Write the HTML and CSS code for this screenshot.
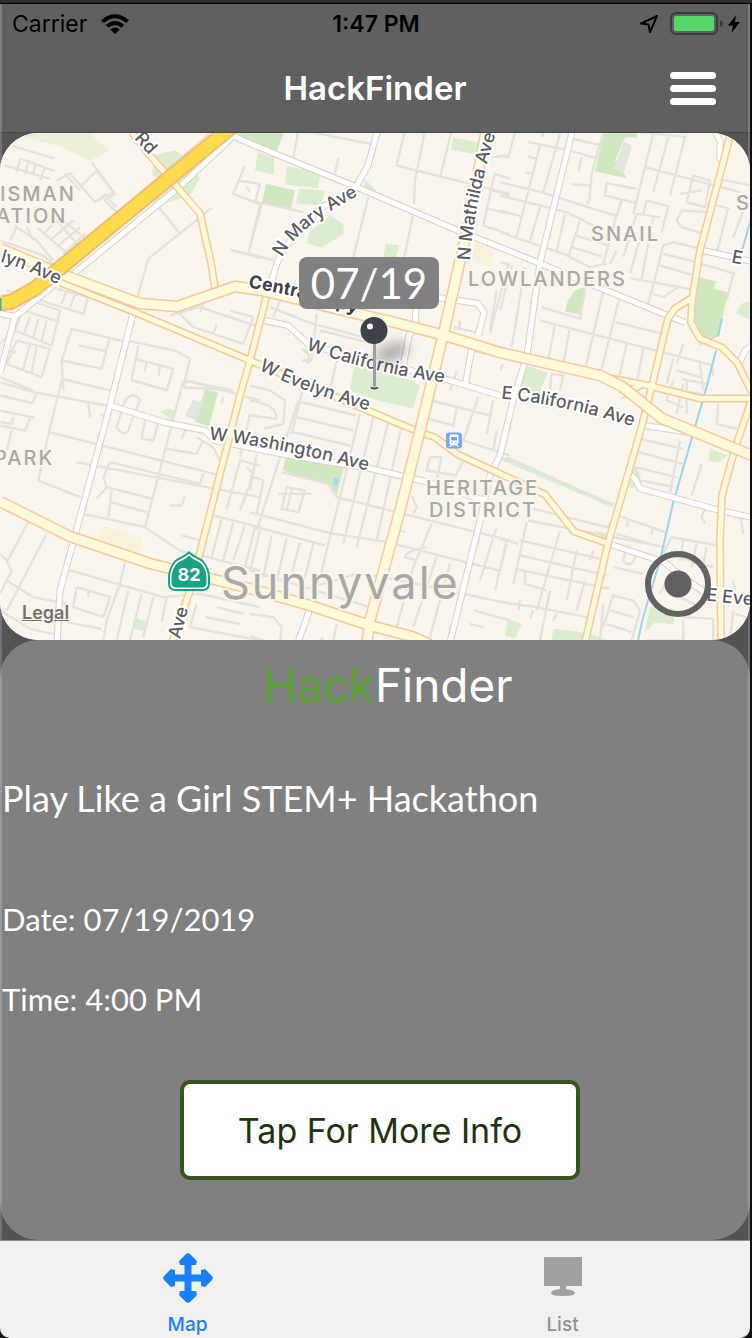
FILE: index.html
```html
<!DOCTYPE html>
<html lang="en">
<head>
<meta charset="utf-8">
<meta name="viewport" content="width=device-width, initial-scale=1">
<title>HackFinder</title>
<link rel="stylesheet" href="styles.css">
</head>
<body>
<div class="app">
  <header class="top">
    <div class="status">
      <div class="status-left">
        <span>Carrier</span>
        <svg class="wifi" viewBox="0 0 28 20" aria-hidden="true">
          <path d="M0 6.200Q14-5.600 28 6.200L25.200 9Q14-.4 2.800 9Z"/>
          <path d="M4.700 11Q14 2.800 23.300 11L20.400 13.800Q14 8.200 7.600 13.800Z"/>
          <path d="M9.300 15.600Q14 11.600 18.700 15.600L14 20Z"/>
        </svg>
      </div>
      <span class="clock">1:47 PM</span>
      <div class="status-right">
        <svg class="location" viewBox="0 0 20 20" aria-hidden="true"><path d="M18 2 2 9.500 9.500 10.500 11 18Z"/></svg>
        <svg class="battery" viewBox="0 0 54 24" aria-hidden="true">
          <rect class="battery-shell" x="1" y="1" width="46" height="21" rx="5"/>
          <rect class="battery-charge" x="4" y="4" width="40" height="15" rx="2"/>
          <path class="battery-tip" d="M50 8Q53 9 53 11.500T50 15Z"/>
        </svg>
        <svg class="bolt" viewBox="0 0 12 18" aria-hidden="true"><path d="M8 0 0 10.500H5L3.500 18 12 7H7Z"/></svg>
      </div>
    </div>
    <div class="nav">
      <h1 class="nav-title">HackFinder</h1>
      <button class="menu" type="button" aria-label="Menu"><span></span><span></span><span></span></button>
    </div>
  </header>

  <main class="content">
    <section class="map" aria-label="Map of Sunnyvale">
      <svg class="map-canvas" viewBox="0 132 750 508" preserveAspectRatio="xMidYMid slice">
        <defs>
          <path id="p-evelyn-l" d="M0 261Q30 270 62 286"/>
          <path id="p-mary" d="M282 257Q300 224 364 192"/>
          <path id="p-mathilda" d="M470 260Q474 200 500 120"/>
          <path id="p-wcal" d="M306 349Q370 372 450 383"/>
          <path id="p-wev" d="M259 369Q300 391 372 411"/>
          <path id="p-ecal" d="M501 398Q570 405 642 429"/>
          <path id="p-wash" d="M209 439Q280 447 374 472"/>
          <path id="p-central" d="M248 287Q310 297 368 317"/>
        </defs>
        <rect class="land" y="132" width="752" height="508"/>

        <g class="park">
          <path class="pale" d="M8 133H90L109 150 90 160 60 146Z"/>
          <path d="M155 154 175 150 190 160 200 178 190 195 150 208 165 180 152 175Z"/>
          <path class="deep" d="M235 132H284L275 155Z"/>
          <path d="M258 152 274 156 274 174 255 170ZM287 166 321 172 318 188 285 184ZM300 188 325 190 320 205 296 203ZM309 232 330 215 344 224 343 234 322 247 307 243ZM366 149 384 152ZM386 243 399 245 395 260 383 258ZM453 137 479 142 476 154 451 149ZM365 178 376 190 364 190Z"/>
          <path class="deep" d="M266 183 295 190 291 208 262 203ZM604 132H637V137H625L615 160 627 178 595 171ZM698 276 716 281 714 288 728 292 718 336 700 345 694 325ZM575 290 586 286 580 314 565 311 568 300Z"/>
          <path d="M525 365 548 372 538 395 515 392ZM355 360 385 365 420 385 413 408 378 400 350 390Z"/>
          <path d="M160 411 168 408 175 410 172 420ZM286 455 344 466 337 495 328 484 283 470Z"/>
          <path class="deep" d="M205 389 218 392 209 426 195 421ZM286 456 343 468 337 493 327 484 283 470ZM300 348 310 350 308 355Z"/>
          <path d="M635 465 641 475 634 488 627 486ZM508 619 522 623 515 638 505 635ZM554 628 590 633 608 640H551ZM134 617 147 621 144 631 133 628ZM650 606 673 608 674 624 655 622 645 632ZM710 448 727 455 718 462 709 460ZM742 303 752 300V320L736 313ZM594 530 607 533 605 541Z"/>
          <path d="M500 455 614 503 612 507 500 459Z"/>
        </g>
        <g class="plot">
          <path d="M102 525 143 538 139 552 97 538ZM475 242 495 248 490 267 472 260Z"/>
          <path class="campus" d="M624 141 632 145 624 172 614 168ZM193 399 204 402 196 420 185 415Z"/>
          <path class="pond" d="M334 477 339 478 337 485 333 484Z"/>
        </g>

        <g class="minor" transform="translate(0 130) scale(.3333)">
          <path d="M38 47 165 84M12 104 60 118 150 145M62 84 48 125M88 88 75 130M108 98 98 132M60 84 165 122M135 110 120 150M170 150 210 128 285 215 320 190M240 170 290 120 340 185 285 215M275 95 345 190 315 210 350 245M325 205 350 230M195 130 240 180M0 330 60 350 130 375 170 410M30 330 50 290 110 330 160 390M110 290 180 350 220 380M130 310 170 270 240 350M150 330 220 270M170 350 240 290M190 370 255 310M150 240 260 325M60 230 45 300M80 290 100 330M465 215 540 310M635 232 445 385 412 500M735 105 700 190 780 222M712 150 780 160M738 165 750 185M780 225 745 370M688 357 780 382M510 555 600 530 780 590M540 550 580 590 730 640 760 560M610 520 600 545M650 580 640 610M690 540 760 560"/>
          <path d="M20 480 90 500 250 550 265 500 170 475M90 510 180 540 155 645 45 600 70 540 180 575M90 560 70 615M115 565 100 620M140 570 125 630M200 480 185 520M225 490 210 530M0 640 40 600M50 630 150 655 125 740 20 700 50 630M90 640 70 715M110 645 95 725M10 660 50 665M190 780 185 690 215 595 370 632M185 690 305 715 328 625M235 645 320 663M185 745 330 780M0 740 100 780M390 632 530 662 570 685 550 770 700 780M415 645 395 750 500 778 520 715 405 685M440 695 433 725M480 708 475 735M550 750 700 780"/>
        </g>
        <g class="minor" transform="translate(250 130) scale(.3333)">
          <path d="M145 0 130 80M160 0 370 42M265 82 255 130M0 155 30 160 15 215M0 210 160 245M35 220 0 350M355 200 310 380M0 370 70 390M465 0 440 105 780 190M525 0 495 150 492 220M605 0 570 140M490 250 440 490M735 125 700 285 780 312M735 130 780 145M725 180 780 195M715 235 780 250M730 80 780 75M775 400 720 610M750 395 780 405M740 480 720 600M60 530 190 580 340 620M90 510 70 560M200 550 185 690 155 690M215 540 400 585M210 600 370 640M120 600 180 640 175 700M260 690 240 780M610 590 700 610M630 570 625 600M620 720 600 780"/>
        </g>
        <g class="minor" transform="translate(500 130) scale(.3333)">
          <path d="M0 75 25 80 45 5M130 0 128 20M85 35 210 60 285 82M220 25 305 45M120 45 50 318M180 10 130 185M85 78 110 85M75 125 100 130M245 80 235 125M310 5 275 130 268 210 260 220M215 162 275 165M0 155 130 187 350 257M0 195 200 245 280 285M0 240 65 258M120 230 90 330M195 250 170 365M240 270 205 380M225 315 325 345M215 350 305 378M0 305 190 370 270 410 320 400M460 10 400 250M350 250 310 400M435 110 720 185M505 20 460 185M555 20 510 195M380 0 560 20M410 175 320 158 315 195 410 218M365 210 345 270M430 250 440 210 505 228 485 305M410 250 480 260M580 135 630 150 615 230 560 215ZM540 190 605 180M620 245 545 240 530 270 545 290 610 310M615 215 690 235M670 148 752 165M685 230 650 370M730 240 700 320M350 360 330 400M430 290 390 430M460 260 425 445M410 250 370 380M525 335 490 345 445 520M520 335 600 355M490 370 590 395M480 405 580 435M390 443 570 475M460 490 490 500 535 470M605 400 705 430M700 430 680 510M0 395 30 400M35 405 0 540M75 410 35 650M120 410 90 540M125 530 240 565 255 480M118 570 640 705M165 580 145 690M210 590 190 700M310 480 255 720M360 495 300 735M345 575 490 610M380 640 355 750M430 655 410 760M550 640 530 700M520 685 500 760M600 700 610 780M530 720 600 740M545 745 620 760M635 705 640 735M150 780 155 730 190 735 180 780M0 720 10 700"/>
        </g>
        <g class="minor" transform="translate(0 380) scale(.3333)">
          <path d="M0 5 100 35 320 75M110 35 98 68 0 45M185 0 148 150 115 300 240 350M265 70 270 110M300 100 315 105M0 90 105 112M40 110 35 130 0 125M90 115 75 150 0 135M35 150 20 210M148 155 660 285M420 60Q400 30 375 60L350 140Q370 170 385 150L395 120 420 60M435 120 425 175 460 180 475 125M550 0 435 440M400 0 500 30M510 0 500 30M560 0 780 60M670 50 665 70M545 175 560 140M500 205 590 220 610 180M590 170 640 200 660 240M230 245 620 320 780 350M330 245 600 310 610 280M330 245 310 290 320 320 290 355M320 320 460 355M335 330 325 410M330 365 440 395M250 400 435 440 540 510 780 570M510 375 545 375 555 345M545 465 600 480M640 405 780 440M680 385 720 240 780 255M720 390 760 280 740 260M750 100 720 230M665 415 635 530M700 425 670 540M735 435 700 540M765 440 735 560M85 425 20 545 35 570 20 600 100 650 200 670M140 460 20 690M0 520 20 540M20 600 0 640M0 690 90 745 180 765M210 570 490 650 600 640 780 680M375 545 360 610 320 720 310 780M230 620 220 680 310 710 330 650 230 620M265 630 265 650M385 630 350 780M425 640 390 780M460 650 430 770M500 650 485 725M590 670 570 740 780 780M615 710 720 730M650 680 730 700M200 725 305 745"/>
        </g>
        <g class="minor" transform="translate(250 380) scale(.3333)">
          <path d="M0 15 60 30 105 60 100 130 40 145M0 60Q80 70 80 115L0 105M160 20 125 160M155 65 320 105M140 110 310 150M130 155 300 195M330 100 275 330 185 690M145 60 20 450M95 275 235 310 260 350 780 480M110 320 165 330 145 395 95 385ZM85 340 185 340M125 325 110 390M0 395 240 458 410 485 745 570M0 435 225 495M370 110 280 490M415 125 320 500M455 135 380 480M0 285 40 300 20 400M20 220 0 330M30 450 0 570M65 465 40 590M110 475 80 600M150 485 120 600M190 490 160 610M0 570 360 680M185 620 320 580 400 590 640 640 780 670M545 60 720 105M535 115 610 135M620 80 610 140M685 50 640 180 780 225M730 60 710 160M740 150 730 210M540 230 575 230 560 300M540 230 530 270 620 285M640 240 615 290M485 345 500 380 490 400M545 430 490 560 440 740M530 500Q470 510 465 530L500 540M560 530 490 740M600 550 540 770M690 420 685 490M740 440 690 600M770 480 735 630M645 600 600 760M670 690 780 720M660 730 700 740M0 700 70 710 95 740 90 780M260 730 250 780M210 780 220 770M0 765 40 780M450 450 465 455"/>
        </g>
        <g class="minor" transform="translate(500 380) scale(.3333)">
          <path d="M20 230 340 375M420 175 550 205M415 215 550 250M405 260 530 290M400 295 520 320M540 180 510 335M520 0 500 60 550 80M530 30 610 40M550 10 530 100M560 0 560 100M655 70 650 130 710 145M605 250 575 345M615 385 605 410 615 430M720 400 730 460M100 385 320 440 330 430M85 420 495 500M340 400 495 455M460 440 455 460M385 415 380 440M80 425 40 610M60 480 320 540M0 475 55 490M60 525 320 585M45 565 330 625M20 490 0 570M180 450 110 690M230 510 200 660M280 510 270 540M75 575 75 610 140 630M0 665 110 680 260 710M150 630 120 780M60 655 55 690M100 690 90 715M255 600 230 690M170 700 160 720M310 670 300 780M335 645 400 660 420 690 395 780M340 640 310 740M330 690 400 710M320 730 395 755M340 560 430 580M350 460 450 490M375 510 370 540Q385 560 400 545L410 520M515 470 655 495M515 470 490 520M550 480 540 540M590 490 575 560M620 500 605 580M500 520 640 560M500 600 480 640M700 690 690 780M705 700 752 715M550 710 640 715 640 780M440 780 550 780 550 720M520 640 600 680M700 600 705 640"/>
        </g>

        <g class="river"><path d="M752 215 742 250M722 318 718 336M716 350 707 385 692 437 673 503 660 560 643 617 638 640"/></g>

        <g class="street-case">
          <path d="M15 316 0 372M0 313 15 316 57 282M168 172 215 132M57 287 180 186 234 135M133 313 110 405 75 535 60 590 57 642M110 405 165 422 205 430 215 440 290 455 370 468 425 481 485 500M230 134 250 143 360 188 460 231 508 250 685 322M377 132 368 165 355 188 320 208 290 240 278 260 268 292M572 132 540 262 527 355 513 400 500 455 490 475 480 520 450 642M265 320 288 325 310 345 380 362 450 380 500 395M438 297 478 303 484 312 478 335M446 333 472 347 465 386M417 300 415 322 409 335 402 372M409 335 420 325M472 347 485 350M630 474 635 478 640 488 720 510 752 517M638 424 690 432M608 543 665 562 680 575 705 592 752 600M703 250 752 261M715 132 720 140 720 158 725 161M740 362 745 350 752 345M310 608 298 642"/>
        </g>
        <g class="street">
          <path d="M15 316 0 372M0 313 15 316 57 282M168 172 215 132M57 287 180 186 234 135M133 313 110 405 75 535 60 590 57 642M110 405 165 422 205 430 215 440 290 455 370 468 425 481 485 500M230 134 250 143 360 188 460 231 508 250 685 322M377 132 368 165 355 188 320 208 290 240 278 260 268 292M572 132 540 262 527 355 513 400 500 455 490 475 480 520 450 642M265 320 288 325 310 345 380 362 450 380 500 395M438 297 478 303 484 312 478 335M446 333 472 347 465 386M417 300 415 322 409 335 402 372M409 335 420 325M472 347 485 350M630 474 635 478 640 488 720 510 752 517M638 424 690 432M608 543 665 562 680 575 705 592 752 600M703 250 752 261M715 132 720 140 720 158 725 161M740 362 745 350 752 345M310 608 298 642"/>
        </g>
        <g class="road-case">
          <path d="M132 132 150 155 200 213 211 262 216 294M268 290 250 360 240 395 198 560 190 590 172 642M60 282 133 311 250 360 370 411 418 431 435 437 458 454 495 471 545 494 574 531 608 543M731 132 700 250 692 300 691 322 700 338 722 347 737 362 752 392M691 298 675 308 668 318 652 385 642 425 608 543 585 642M590 374 648 385 700 398 752 398M752 398 735 448 722 495 720 540 721 642M620 395 640 385"/>
        </g>
        <g class="road">
          <path d="M132 132 150 155 200 213 211 262 216 294M268 290 250 360 240 395 198 560 190 590 172 642M60 282 133 311 250 360 370 411 418 431 435 437 458 454 495 471 545 494 574 531 608 543M731 132 700 250 692 300 691 322 700 338 722 347 737 362 752 392M691 298 675 308 668 318 652 385 642 425 608 543 585 642M590 374 648 385 700 398 752 398M752 398 735 448 722 495 720 540 721 642M620 395 640 385"/>
        </g>
        <g class="artery-case">
          <path d="M0 248 57 272 140 303 177 306 215 293 235 286 262 290 340 309 395 322 445 335 500 352 600 375 622 386 662 418 752 455M486 132 467 230 443 335 420 430 400 510 370 620 367 642M0 501 70 536 150 563 250 588 310 605 370 625 412 636 430 644"/>
        </g>
        <g class="artery">
          <path d="M0 248 57 272 140 303 177 306 215 293 235 286 262 290 340 309 395 322 445 335 500 352 600 375 622 386 662 418 752 455M486 132 467 230 443 335 420 430 400 510 370 620 367 642M0 501 70 536 150 563 250 588 310 605 370 625 412 636 430 644"/>
        </g>
        <path class="highway-case" d="M232 126 57 270 35 288 12 301 0 303"/>
        <path class="highway" d="M232 126 57 270 35 288 12 301 0 303"/>
        <path class="teal" d="M0 298H1V310H0Z"/>

        <g class="label area">
          <text x="0" y="200">ISMAN</text>
          <text x="-4" y="222">ATION</text>
          <text x="591" y="240">SNAIL</text>
          <text x="468" y="285">LOWLANDERS</text>
          <text x="736" y="209">S</text>
          <text x="-6" y="464">PARK</text>
          <text x="426" y="494">HERITAGE</text>
          <text x="429" y="516">DISTRICT</text>
        </g>
        <text class="label city" x="221" y="598">Sunnyvale</text>
        <g class="label road-name">
          <text><textPath href="#p-evelyn-l">lyn Ave</textPath></text>
          <text><textPath href="#p-mary">N Mary Ave</textPath></text>
          <text><textPath href="#p-mathilda">N Mathilda Ave</textPath></text>
          <text><textPath href="#p-wcal">W California Ave</textPath></text>
          <text><textPath href="#p-wev">W Evelyn Ave</textPath></text>
          <text><textPath href="#p-ecal">E California Ave</textPath></text>
          <text><textPath href="#p-wash">W Washington Ave</textPath></text>
          <text transform="translate(134 138) rotate(48)">Rd</text>
          <text transform="translate(180 639) rotate(-75)">Ave</text>
          <text transform="translate(731 262) rotate(10)">E</text>
          <text transform="translate(706 600) rotate(6)">E Eve</text>
          <text class="express"><textPath href="#p-central">Central Expy</textPath></text>
        </g>

        <g transform="translate(168 550)">
          <path class="shield-rim" d="M21 2C26 7 31 7 35 11 39 16 41 21 41 27V33Q41 39 35 39.500H7Q1 39 1 33V27C1 21 3 16 7 11 11 7 16 7 21 2Z"/>
          <path class="shield" d="M21 5C26 10 30 10 33 13 37 18 38.500 22 38.500 27V32Q38.500 36.500 34 37H8Q3.500 36.500 3.500 32V27C3.500 22 5 18 9 13 12 10 16 10 21 5Z"/>
          <text class="shield-text" x="21" y="30">82</text>
        </g>
        <g class="station" transform="translate(446 432)">
          <rect width="16" height="16" rx="3"/>
          <path fill-rule="evenodd" d="M5 2H11Q12.500 2 12.500 4V10Q12.500 12 11 12L13 14.500H11.500L10.500 13H5.500L4.500 14.500H3L5 12Q3.500 12 3.500 10V4Q3.500 2 5 2ZM5 4.500V8H11V4.500ZM5 9.500V10.500H6.500V9.500ZM9.500 9.500V10.500H11V9.500Z"/>
        </g>

        <g class="pin">
          <ellipse class="pin-shadow" cx="392" cy="352" rx="18" ry="9" transform="rotate(-20 392 352)"/>
          <path class="pin-shaft" d="M373 342H376V386H373Z"/>
          <path class="pin-foot" d="M371 387Q374.500 389 378 387"/>
          <circle class="pin-head" cx="374" cy="330" r="13.500"/>
          <circle class="pin-shine" cx="370" cy="326" r="3"/>
        </g>
      </svg>
      <div class="callout">07/19</div>
      <a class="legal" href="#legal">Legal</a>
      <button class="locate" type="button" aria-label="Show my location"></button>
    </section>

    <section class="card">
      <h2 class="brand"><span class="brand-accent">Hack</span>Finder</h2>
      <p class="event-name">Play Like a Girl STEM+ Hackathon</p>
      <p class="event-detail">Date: 07/19/2019</p>
      <p class="event-detail">Time: 4:00 PM</p>
      <button class="more" type="button">Tap For More Info</button>
    </section>
  </main>

  <nav class="tabs" aria-label="Sections">
    <a class="tab active" href="#map">
      <svg class="tab-icon" viewBox="0 0 50 50" aria-hidden="true"><path d="M25 0 27 1 34 8 33 12H28.500V21.500H38V17L42 16 49 23 50 25 49 27 42 34 38 33V28.500H28.500V38H33L34 42 27 49 25 50 23 49 16 42 17 38H21.500V28.500H12V33L8 34 1 27 0 25 1 23 8 16 12 17V21.500H21.500V12H17L16 8 23 1Z"/></svg>
      <span>Map</span>
    </a>
    <a class="tab" href="#list">
      <svg class="tab-icon" viewBox="0 0 50 50" aria-hidden="true"><path d="M6 4H44V33H28V36Q37 37 37 40T25 43 13 40 22 36V33H6Z"/></svg>
      <span>List</span>
    </a>
  </nav>
</div>
</body>
</html>
```
FILE: styles.css
```css
* { box-sizing: border-box; }

body {
  margin: 0;
  min-height: 100vh;
  padding-right: 2px;
  background: #101012;
  border-top: 3px solid #2e2e31;
  font-family: Inter, "Liberation Sans", sans-serif;
}

h1, h2, p { margin: 0; font-weight: 400; }
button { font: inherit; padding: 0; cursor: pointer; }

.app {
  position: relative;
  display: flex;
  flex-direction: column;
  min-height: calc(100vh - 3px);
  overflow: hidden;
  background: #545454;
  border-top: 1px solid #000;
  border-radius: 0 0 10px 10px;
}

.app::after {
  content: "";
  position: absolute;
  inset: 0 0 98px;
  border: solid rgba(255, 255, 255, .18);
  border-width: 0 2px;
  pointer-events: none;
}

/* Status and navigation bars */
.top {
  background: #606060;
  border-bottom: 1px solid #484848;
}

.status {
  display: grid;
  grid-template-columns: 1fr auto 1fr;
  align-items: center;
  height: 40px;
  padding: 0 10px 0 12px;
  font-size: 23px;
  line-height: 28px;
  color: #000;
}

.status-left, .status-right { display: flex; align-items: center; }
.status-left { gap: 14px; }
.status-right { justify-content: flex-end; gap: 7px; }
.clock { font-weight: 600; }
.wifi { width: 28px; height: 20px; }
.location { width: 20px; height: 20px; margin-right: 4px; fill: none; stroke: #000; stroke-width: 2; stroke-linejoin: round; }
.battery { width: 54px; height: 24px; margin-right: -3px; }
.battery-shell { fill: none; stroke: #3b3b3b; stroke-width: 2; }
.battery-charge { fill: #55d769; }
.battery-tip { fill: #3b3b3b; }
.bolt { width: 12px; height: 18px; }

.nav {
  display: grid;
  grid-template-columns: 1fr auto 1fr;
  align-items: center;
  height: 88px;
  padding: 0 34px;
}

.nav-title { grid-column: 2; font-size: 33px; font-weight: 600; color: #fff; }

.menu {
  justify-self: end;
  display: grid;
  gap: 6px;
  width: 46px;
  border: 0;
  background: none;
}

.menu span { height: 7px; border-radius: 4px; background: #fff; }

.content { flex: 1; display: flex; flex-direction: column; }

/* Map */
.map {
  position: relative;
  overflow: hidden;
  border-radius: 38px;
  background: #f9f4ec;
}

.map-canvas { display: block; width: 100%; aspect-ratio: 750 / 507; }
.land { fill: #f9f4ec; }
.park { fill: #dcedcf; }
.park .pale { fill: #edefd9; }
.park .deep { fill: #d0e8c0; }
.plot { fill: #f9f0d9; }
.plot .campus { fill: #e1e6e0; }
.plot .pond { fill: #a5d9f2; }

.minor, .river, .street, .street-case, .road, .road-case,
.artery, .artery-case, .highway, .highway-case {
  fill: none;
  stroke-linejoin: round;
}

.minor { stroke: #e5e2dd; stroke-width: 7px; }
.river { stroke: #96d5f1; stroke-width: 2px; }
.street-case { stroke: #d9d2cb; stroke-width: 7px; }
.street { stroke: #fff; stroke-width: 5px; }
.road-case { stroke: #f5ca9c; stroke-width: 8px; }
.road { stroke: #fdf8d8; stroke-width: 5px; }
.artery-case { stroke: #f5ca9c; stroke-width: 12px; }
.artery { stroke: #fdf9d9; stroke-width: 9px; }
.highway-case { stroke: #f3bd74; stroke-width: 16px; }
.highway { stroke: #ffdc4e; stroke-width: 12px; }
.teal { fill: #19a283; stroke: #19a283; }

.label { paint-order: stroke; stroke: #f9f4ec; stroke-width: 4px; stroke-linejoin: round; }
.area { font-size: 20px; font-weight: 500; letter-spacing: 2px; fill: #aaa8a4; }
.city { font-size: 45px; letter-spacing: 2px; fill: #aaa8a4; }
.road-name { font-size: 18px; font-weight: 500; fill: #5d5d5e; stroke: #fff; }
.express { font-weight: 700; fill: #3f4144; }

.shield-rim { fill: #fff; stroke: #19a283; stroke-width: 2px; }
.shield { fill: #19a283; }
.shield-text { font-size: 18px; font-weight: 700; fill: #fff; text-anchor: middle; }
.station rect { fill: #76a9ee; }
.station path { fill: #fff; }

.pin-shadow { fill: #000; opacity: .28; filter: blur(6px); }
.pin-shaft { fill: #9b9da0; }
.pin-foot { fill: none; stroke: #3c4047; stroke-width: 2px; }
.pin-head { fill: #3e434b; }
.pin-shine { fill: #fff; }

.callout {
  position: absolute;
  left: calc(50% - 76px);
  top: 24.500%;
  width: 140px;
  border-radius: 8px;
  background: #808080;
  color: #fff;
  font: 400 42px/52px Lato, sans-serif;
  text-align: center;
}

.legal {
  position: absolute;
  left: 22px;
  bottom: 16px;
  font-size: 18px;
  font-weight: 600;
  line-height: 22px;
  color: #757371;
}

.locate {
  position: absolute;
  right: 39px;
  bottom: 23px;
  width: 66px;
  height: 66px;
  border: 6px solid #626262;
  border-radius: 50%;
  background: radial-gradient(circle, #626262 13px, transparent 14px);
}

/* Event card */
.card {
  flex: 1;
  display: flex;
  flex-direction: column;
  padding: 16px 0 60px 2px;
  border-radius: 38px;
  background: #808080;
  color: #fff;
}

.brand {
  padding-left: 24px;
  font-size: 46px;
  line-height: 58px;
  text-align: center;
}

.brand-accent { color: #5aa233; }

.event-name {
  margin-top: 58px;
  font: 36px/52px Lato, sans-serif;
}

.event-detail {
  margin-top: 40px;
  font: 31px/40px Lato, sans-serif;
}

.event-name + .event-detail { margin-top: 75px; }

.more {
  align-self: center;
  width: 400px;
  max-width: 90%;
  height: 100px;
  margin: 61px 0 0 8px;
  border: 4px solid #34571f;
  border-radius: 10px;
  background: #fff;
  color: #20350f;
  font-size: 34px;
}

/* Tab bar */
.tabs {
  display: grid;
  grid-template-columns: 1fr 1fr;
  height: 98px;
  background: #f1f1f1;
  border-top: 1px solid #8c8c8c;
}

.tab {
  display: flex;
  flex-direction: column;
  align-items: center;
  gap: 10px;
  padding-top: 12px;
  font-size: 19px;
  font-weight: 500;
  line-height: 24px;
  color: #929292;
  text-decoration: none;
}

.tab-icon { width: 50px; height: 50px; fill: #a0a0a0; }
.tab.active { color: #1a80fb; }
.tab.active .tab-icon { fill: #1a80fb; }
```
